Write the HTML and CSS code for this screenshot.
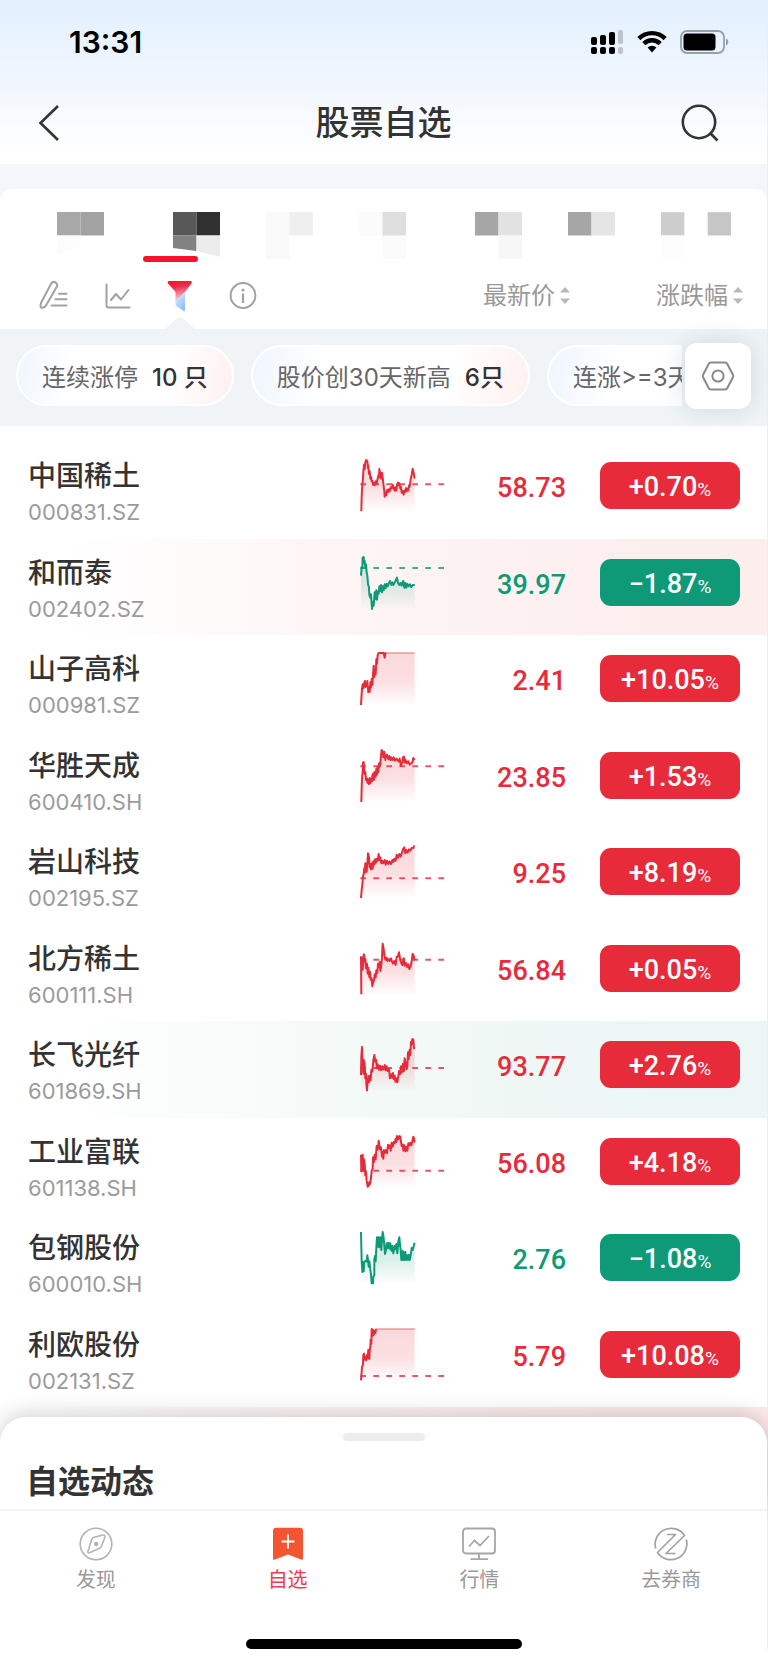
FILE: index.html
```html
<!DOCTYPE html>
<html lang="zh-CN">
<head>
<meta charset="utf-8">
<meta name="viewport" content="width=device-width, initial-scale=1">
<title>股票自选</title>
<link rel="stylesheet" href="styles.css">
</head>
<body>
<div class="page">
  <header class="top">
    <div class="status">
      <span class="status-time">13:31</span>
      <div class="status-icons">
        <svg width="33" height="24" viewBox="0 0 33 24"><g fill="#000"><rect x="0" y="7" width="6" height="8" rx="2"/><rect x="9" y="5" width="6" height="10" rx="2"/><rect x="18" y="2" width="6" height="13" rx="2"/><rect x="0" y="17" width="6" height="7" rx="2"/><rect x="9" y="17" width="6" height="7" rx="2"/><rect x="18" y="17" width="6" height="7" rx="2"/></g><g fill="#bcc4cd"><rect x="27" y="0" width="5" height="14" rx="2"/><rect x="27" y="17" width="5" height="7" rx="2"/></g></svg>
        <svg width="30" height="24" viewBox="0 0 30 24"><g fill="none" stroke="#000" stroke-width="4.4"><path d="M1.8 8.6a18.6 18.6 0 0 1 26.4 0"/><path d="M6.8 13.6a11.6 11.6 0 0 1 16.4 0"/></g><path d="M10.6 17.6a6.4 6.4 0 0 1 8.8 0L15 22.6z" fill="#000"/></svg>
        <svg width="49" height="24" viewBox="0 0 49 24"><rect x="1" y="1" width="43" height="22" rx="6" fill="none" stroke="#97a0a8" stroke-width="1.8"/><rect x="3.500" y="3.500" width="32" height="17" rx="3.5" fill="#000"/><path d="M46 8.5c3 1.3 3 5.700 0 7z" fill="#97a0a8"/></svg>
      </div>
    </div>
    <div class="nav">
      <button class="icon-btn" aria-label="返回"><svg width="22" height="36" viewBox="0 0 22 36"><path d="M20 1 2.500 18 20 35" fill="none" stroke="#333" stroke-width="2.600"/></svg></button>
      <h1 class="nav-title">股票自选</h1>
      <button class="icon-btn" aria-label="搜索"><svg width="38" height="38" viewBox="0 0 38 38"><g fill="none" stroke="#333" stroke-width="2.600"><circle cx="18" cy="18" r="16.200"/><path d="m29.500 29.500 7 7"/></g></svg></button>
    </div>
  </header>

  <main class="panel">
    <nav class="groups" aria-label="分组">
      <button class="group group-long" aria-label="分组 1"><svg class="mosaic" viewBox="0 0 2 2"><path fill="#a8a8a8" d="M0 0h1v1H0z"/><path fill="#a2a2a2" d="M1 0h1v1H1z"/><path fill="#fcfcfc" d="M0 1h1v.5L0 1.800z"/></svg></button>
      <button class="group group-active" aria-label="分组 2"><svg class="mosaic" viewBox="0 0 2 2"><path fill="#585858" d="M0 0h1v1H0z"/><path fill="#303030" d="M1 0h1v1H1z"/><path fill="#828282" d="M0 1h1v.66L0 1.530z"/><path fill="#ececec" d="M1 1h1v.9l-1-.24z"/></svg></button>
      <button class="group" aria-label="分组 3"><svg class="mosaic" viewBox="0 0 2 2"><path fill="#f9f9f9" d="M0 0h1v2H0z"/><path fill="#efefef" d="M1 0h1v1H1z"/></svg></button>
      <button class="group group-long" aria-label="分组 4"><svg class="mosaic" viewBox="0 0 2 2"><path fill="#fbfbfb" d="M0 0h1v1H0zM1 1h1v1H1z"/><path fill="#dedede" d="M1 0h1v1H1z"/></svg></button>
      <button class="group" aria-label="分组 5"><svg class="mosaic" viewBox="0 0 2 2"><path fill="#a6a6a6" d="M0 0h1v1H0z"/><path fill="#e2e2e2" d="M1 0h1v1H1z"/><path fill="#f7f7f7" d="M1 1h1v1H1z"/></svg></button>
      <button class="group" aria-label="分组 6"><svg class="mosaic" viewBox="0 0 2 2"><path fill="#a6a6a6" d="M0 0h1v1H0z"/><path fill="#e5e5e5" d="M1 0h1v1H1z"/></svg></button>
      <button class="group" aria-label="分组 7"><svg class="mosaic mosaic-wide" viewBox="0 0 3 2"><path fill="#cdcdcd" d="M0 0h1v1H0z"/><path fill="#c6c6c6" d="M2 0h1v1H2z"/><path fill="#fdfdfd" d="M0 1h1v1H0z"/></svg></button>
    </nav>

    <div class="tools">
      <div class="tool-icons">
        <button class="icon-btn" aria-label="编辑"><svg width="30" height="32" viewBox="0 0 30 32"><g fill="none" stroke="#a2a2a2" stroke-width="2" stroke-linejoin="round" stroke-linecap="round"><path d="M12.500 3a3.300 3.300 0 0 1 5.400 3.600L7 25.500q-1.200 2-3.500 2.300-2.200 0-2-2.200.1-2 1.200-4z"/><path d="M20 13.800h7.500M16.500 19.300h11M12.500 25.500h15"/></g></svg></button>
        <button class="icon-btn" aria-label="走势图"><svg width="26" height="32" viewBox="0 0 26 32"><g fill="none" stroke="#a2a2a2" stroke-width="2" stroke-linejoin="round" stroke-linecap="round"><path d="M1.500 4.500v21q0 2 2 2H24.500"/><path d="m6 20 5-6 5 5.500 7.500-9.500"/></g></svg></button>
        <button class="icon-btn icon-funnel" aria-label="筛选" aria-expanded="true"><svg width="26" height="32" viewBox="0 0 26 32"><defs><linearGradient id="fr" x1=".3" y1="0" x2=".5" y2="1"><stop offset="0" stop-color="#f5142f"/><stop offset=".3" stop-color="#ee2f4c"/><stop offset="1" stop-color="#fde6ec"/></linearGradient><linearGradient id="fb" x1="0" y1="0" x2=".6" y2="1"><stop offset="0" stop-color="#e6f1ff"/><stop offset="1" stop-color="#8cc0ff"/></linearGradient></defs><path fill="url(#fr)" d="M1.500 1h22.500q1.500 1 .5 2.500L18 12 8.500 22V12L1 3.500Q0 2 1.500 1z"/><path fill="url(#fb)" d="M18 12V30q0 1.500-1.500 1L9.500 26q-1-1-1-2V21z"/></svg></button>
        <button class="icon-btn" aria-label="说明"><svg width="28" height="32" viewBox="0 0 28 32"><circle cx="14" cy="15.500" r="12.400" fill="none" stroke="#a2a2a2" stroke-width="2"/><path d="M14 13.500v9.500" stroke="#a2a2a2" stroke-width="2.200"/><circle cx="14" cy="10" r="1.600" fill="#a2a2a2"/></svg></button>
      </div>
      <div class="sorts">
        <button class="sort">最新价<svg width="12" height="20" viewBox="0 0 12 20"><path fill="#b9b9b9" d="m6 1 5 5.500H1zM6 18l5-5.500H1z"/></svg></button>
        <button class="sort">涨跌幅<svg width="12" height="20" viewBox="0 0 12 20"><path fill="#b9b9b9" d="m6 1 5 5.500H1zM6 18l5-5.500H1z"/></svg></button>
      </div>
    </div>

    <section class="filters">
      <div class="chips">
        <button class="chip"><span>连续涨停</span><b>10 只</b></button>
        <button class="chip"><span>股价创30天新高</span><b>6只</b></button>
        <button class="chip chip-cut"><span>连涨&gt;=3天</span></button>
      </div>
      <button class="settings" aria-label="设置"><svg width="34" height="30" viewBox="0 0 34 30"><g fill="none" stroke="#8a8a8a" stroke-width="2" stroke-linejoin="round"><path d="M10 1.500h14q1.500 0 2.200 1.200l5.600 10.800q.8 1.500 0 3l-5.600 10.800q-.7 1.200-2.200 1.200H10q-1.500 0-2.200-1.200L2.200 16.500q-.8-1.500 0-3L7.800 2.700Q8.500 1.500 10 1.500z"/><circle cx="17" cy="15" r="5.600"/></g></svg></button>
    </section>

    <table class="stocks"><tbody id="rows"></tbody></table>
    <div class="peek"></div>
  </main>

  <section class="sheet">
    <span class="grip"></span>
    <h2 class="sheet-title">自选动态</h2>
  </section>

  <footer class="bottom">
    <nav class="tabbar">
      <a class="tab" href="#discover"><svg width="34" height="34" viewBox="0 0 34 34"><g fill="none" stroke="#b4b4b4" stroke-width="1.600" stroke-linejoin="round"><circle cx="17" cy="17" r="15.800"/><path d="M12.800 12.200q.5-1.200 1.600-1.700L24 8q2.500-.2 1.900 2.200L22.500 19q-.6 1.600-2 2.300L11 25.600q-2.600.8-2-1.600z"/></g><circle cx="17.200" cy="17" r="2.200" fill="#b0b0b0"/></svg>发现</a>
      <a class="tab tab-active" href="#watch"><svg width="34" height="34" viewBox="0 0 34 34"><path fill="#f45531" d="M5 .8h24q3 0 3 3v27.500q0 2.200-2 1.200L17 27.500 4 32.500q-2 1-2-1.200V3.800q0-3 3-3z"/><path d="M17 7.500v14M10.500 14.500h13" stroke="#fff" stroke-width="1.800"/></svg>自选</a>
      <a class="tab" href="#market"><svg width="34" height="34" viewBox="0 0 34 34"><g fill="none" stroke="#a6a6a6" stroke-width="1.800"><rect x="1" y="1.500" width="32" height="25" rx="3"/><path d="M17 26.500v5.500M8.500 32.200h17.500M7 19.500l5.500-6 5.500 5 9-9.500"/></g></svg>行情</a>
      <a class="tab" href="#broker"><svg width="34" height="34" viewBox="0 0 34 34"><g fill="none" stroke="#a2a2a2" stroke-width="1.700" stroke-linejoin="round"><path d="M1.700 21.500A16 16 0 0 1 30.500 8.500L12 26.500h9.500M32.300 12.500A16 16 0 0 1 3.500 25.500L21.500 7.500H13"/></g></svg>去券商</a>
    </nav>
    <div class="home-bar"></div>
  </footer>
</div>
<script src="rows.js"></script>
</body>
</html>
```
FILE: rows.js
```js
// Each line is a list of x,y pairs in a 264 x 174 box; base is the height of the previous close.
const stocks = [
  { name: "中国稀土", code: "000831.SZ", price: "58.73", change: "+0.70", base: 79,
    line: "7,160 8,116 9,95 12,60 13,40 15,20 17,34 19,12 22,6 25,10 27,30 28,22 30,48 32,40 34,62 36,56 38,70 40,68 42,80 44,74 47,82 50,70 53,76 56,62 58,52 60,58 61,33 64,50 66,62 69,44 71,58 73,76 76,100 77,116 80,104 82,112 84,96 87,102 89,94 92,100 95,88 98,92 101,80 104,90 107,98 109,88 112,98 114,80 117,74 120,82 121,76 124,92 126,86 128,104 130,98 134,110 136,98 138,102 141,90 143,100 146,92 148,98 150,82 152,86 155,64 158,50 161,32 164,44 167,62" },
  { name: "和而泰", code: "002402.SZ", price: "39.97", change: "−1.87", tint: "red", base: 39,
    line: "6,62 8,36 10,40 11,8 14,6 15,24 17,18 19,38 21,28 23,52 25,62 27,86 30,98 31,120 34,128 36,118 39,162 42,140 44,152 47,112 49,132 52,106 54,134 56,110 59,116 61,94 64,108 66,90 69,112 71,94 74,106 77,88 80,100 83,86 86,94 89,86 93,78 97,90 100,82 103,90 106,84 110,76 114,68 117,84 121,90 124,84 128,92 131,80 133,78 136,98 139,84 142,98 145,86 149,94 153,88 157,96 161,90 167,90" },
  { name: "山子高科", code: "000981.SZ", price: "2.41", change: "+10.05", cap: 60,
    line: "6,162 7,146 9,112 11,100 13,112 15,98 18,90 19,108 21,98 23,106 25,90 27,112 28,124 31,108 32,122 34,94 36,110 38,84 40,102 42,72 44,44 46,78 48,60 50,70 52,24 54,38 56,12 59,6 74,6 77,20 79,8 82,6" },
  { name: "华胜天成", code: "600410.SH", price: "23.85", change: "+1.53", base: 55,
    line: "7,162 8,120 9,92 11,70 12,44 14,42 15,60 17,78 19,72 21,96 24,92 25,104 28,94 30,108 32,90 34,106 36,92 39,100 40,82 43,76 45,96 47,72 50,86 52,62 54,80 56,56 58,72 60,46 62,56 64,48 66,22 68,6 71,10 73,28 76,12 79,36 81,26 84,20 88,34 91,24 94,36 97,28 100,36 104,28 108,38 113,32 118,40 122,32 126,54 130,42 132,28 135,26 137,44 140,36 143,46 148,40 152,50 156,46 160,44 163,30 167,36" },
  { name: "岩山科技", code: "002195.SZ", price: "9.25", change: "+8.19", base: 103,
    line: "6,162 8,138 10,122 12,96 14,90 16,72 17,86 19,58 21,74 23,84 25,58 27,28 30,40 32,70 34,60 36,76 39,58 41,74 43,52 46,62 48,46 51,56 53,44 56,50 59,30 61,48 64,40 67,58 70,50 73,58 77,48 80,62 84,50 88,60 92,52 96,60 100,48 103,54 106,44 110,50 113,32 117,42 121,30 125,38 129,26 133,14 136,10 139,28 142,18 146,26 150,16 154,20 158,12 163,12 165,6 167,6" },
  { name: "北方稀土", code: "600111.SH", price: "56.84", change: "+0.05", base: 56,
    line: "7,160 6,48 9,60 11,86 13,46 15,40 17,62 19,54 21,82 24,68 26,98 28,80 31,108 33,92 35,116 38,112 40,136 42,126 45,118 47,100 50,110 52,88 55,96 57,68 60,78 62,62 64,90 66,80 69,50 71,8 74,24 76,42 79,56 82,50 85,60 88,54 92,60 96,52 99,62 102,68 106,60 110,72 113,48 117,46 120,34 123,52 126,64 130,72 134,52 137,74 141,66 144,78 148,70 151,84 155,76 158,60 161,38 164,44 167,58" },
  { name: "长飞光纤", code: "601869.SH", price: "93.77", change: "+2.76", tint: "green", base: 93,
    line: "6,114 7,60 9,30 11,76 13,110 14,68 17,82 19,124 21,110 22,140 24,160 26,132 28,118 30,136 32,116 35,130 37,98 40,104 43,70 46,54 49,74 51,68 54,94 56,82 60,98 63,86 66,100 69,88 73,98 77,84 80,100 83,88 86,102 90,96 93,124 96,112 99,122 102,108 104,126 107,116 109,134 112,124 115,136 118,118 120,102 123,112 126,88 129,106 132,80 135,102 137,64 140,78 143,96 145,88 147,46 149,66 152,38 154,54 156,14 158,22 160,6 163,8 165,34 167,30" },
  { name: "工业富联", code: "601138.SH", price: "56.08", change: "+4.18", base: 110,
    line: "6,62 7,112 9,70 11,62 13,110 15,76 17,88 19,124 21,112 23,140 26,158 29,156 31,144 33,150 36,132 38,110 41,104 42,70 45,84 47,62 50,76 53,36 55,48 57,42 59,20 61,32 63,46 66,40 69,68 71,54 73,74 75,48 78,56 81,48 84,58 87,32 90,42 93,34 95,50 98,26 101,38 104,24 107,28 110,14 112,24 114,6 118,16 121,6 124,8 126,24 128,36 131,32 133,50 136,34 139,52 142,38 145,50 148,28 151,34 154,26 157,34 160,22 163,8 165,14 167,26" },
  { name: "包钢股份", code: "600010.SH", price: "2.76", change: "−1.08",
    line: "6,6 7,50 8,92 10,126 12,96 14,124 16,96 20,92 23,94 25,76 27,90 29,110 31,94 34,118 36,134 38,160 42,160 43,140 46,136 46,90 48,78 50,94 52,52 54,22 57,50 59,22 62,52 64,22 67,60 69,28 71,6 74,24 76,48 78,72 81,60 83,40 86,54 88,38 91,56 94,40 97,62 100,48 103,70 107,48 110,58 112,42 115,70 118,34 121,22 123,44 125,60 127,90 130,62 132,90 134,66 136,90 139,66 141,90 144,76 147,90 149,74 152,90 155,76 158,54 161,60 164,48 167,38" },
  { name: "利欧股份", code: "002131.SZ", price: "5.79", change: "+10.08", base: 147, cap: 50,
    line: "6,160 8,134 9,120 12,112 13,84 15,80 17,98 20,90 22,100 24,84 26,94 28,68 31,96 32,72 34,60 35,38 37,50 38,6 41,26 42,8 44,24 47,12 49,18 51,6" }
];

const colors = { up: "#e72b3a", down: "#0e9a77" };

function spark(s, dir, i) {
  const color = colors[dir];
  const end = s.cap ? " 167,6" : "";
  const area = s.line + end + " 167,164 6,164";
  return `<svg class="spark" viewBox="0 0 264 174" aria-hidden="true">
    <defs><linearGradient id="area${i}" gradientUnits="userSpaceOnUse" x1="0" y1="0" x2="0" y2="164">
      <stop offset="0" stop-color="${color}" stop-opacity=".18"/>
      <stop offset=".55" stop-color="${color}" stop-opacity=".15"/>
      <stop offset="1" stop-color="${color}" stop-opacity="0"/></linearGradient></defs>
    <polygon points="${area}" fill="url(#area${i})"/>
    ${s.base ? `<path d="M4 ${s.base}H256" stroke="${color}" stroke-width="6" stroke-dasharray="17 22" opacity=".8"/>` : ""}
    ${s.cap ? `<path d="M${s.cap} 6H167" stroke="${color}" stroke-width="5" opacity=".45"/>` : ""}
    <polyline points="${s.line}" fill="none" stroke="${color}" stroke-width="6" stroke-linejoin="round"/>
  </svg>`;
}

document.getElementById("rows").innerHTML = stocks.map((s, i) => {
  const dir = s.change[0] === "+" ? "up" : "down";
  return `<tr class="stock ${s.tint ? "tint-" + s.tint : ""}">
    <td class="cell-name"><div class="name">${s.name}</div><div class="code">${s.code}</div></td>
    <td class="cell-spark">${spark(s, dir, i)}</td>
    <td class="cell-price ${dir}">${s.price}</td>
    <td class="cell-change"><span class="badge badge-${dir}">${s.change}<small>%</small></span></td>
  </tr>`;
}).join("");
```
FILE: styles.css
```css
* { box-sizing: border-box; }
body {
  margin: 0;
  background: #fff;
  color: #333;
  font-family: Inter, "Noto Sans CJK SC", sans-serif;
}
h1, h2 { margin: 0; }
button {
  margin: 0;
  padding: 0;
  border: 0;
  background: none;
  color: inherit;
  font: inherit;
}
svg { display: block; flex: none; }
.page { border-right: 1px solid #eee; }

.top { background: linear-gradient(#e3effe 0, #e6f2fe 24px, #f2f7fe 90px, #fff 154px); }
.status {
  display: flex;
  align-items: center;
  justify-content: space-between;
  height: 84px;
  padding: 0 38px 0 69px;
}
.status-time { color: #000; font-size: 30px; font-weight: 600; line-height: 36px; }
.status-icons { display: flex; gap: 13px; }
.nav {
  display: flex;
  align-items: center;
  justify-content: space-between;
  height: 80px;
  padding: 0 48px 2px 38px;
}
.nav-title { padding-left: 26px; font-size: 34px; font-weight: 500; line-height: 48px; }

.panel { padding-top: 25px; background: linear-gradient(#f4f6fb 60px, #fff 60px); }
.groups {
  display: flex;
  gap: 46px;
  padding: 23px 35px 0 57px;
  border-radius: 12px 12px 0 0;
  background: #fff;
}
.group { position: relative; }
.group-long { margin-right: 23px; }
.group-active::after {
  content: "";
  position: absolute;
  left: -30px;
  bottom: -3px;
  width: 55px;
  height: 6px;
  border-radius: 3px;
  background: #f5142f;
}
.mosaic { width: 47px; height: 47px; }
.mosaic-wide { width: 70px; }

.tools {
  display: flex;
  align-items: center;
  justify-content: space-between;
  height: 70px;
  padding: 3px 23px 0 39px;
}
.tool-icons { display: flex; gap: 36px; }
.sorts { display: flex; gap: 85px; color: #999; }
.sort { display: flex; align-items: center; gap: 4px; font-size: 24px; line-height: 32px; }

.filters { position: relative; padding: 16px 0 20px 16px; background: #f0f4f6; }
.filters::before {
  content: "";
  position: absolute;
  left: 165px;
  bottom: 100%;
  border: solid transparent;
  border-width: 0 15px 13px;
  border-bottom-color: #f0f4f6;
}
.chips { display: flex; gap: 17px; margin-right: 85px; overflow: hidden; }
.chip {
  display: flex;
  flex: none;
  align-items: center;
  gap: 14px;
  height: 61px;
  padding: 0 24px;
  border: 2px solid #fff;
  border-radius: 31px;
  background: linear-gradient(100deg, #eff6ff, #fff 26%, #fff 70%, #fff0f0);
  color: #666;
  font-size: 24px;
  white-space: nowrap;
}
.chip b { color: #333; font-weight: 500; }
.chip-cut { width: 278px; }
.settings {
  position: absolute;
  top: 14px;
  right: 16px;
  display: grid;
  place-items: center;
  width: 66px;
  height: 66px;
  border-radius: 12px;
  background: #fff;
  box-shadow: 0 0 24px rgba(120, 140, 160, .28);
}

.stocks { width: 100%; height: 965px; margin-top: 16px; border-collapse: collapse; table-layout: auto; }
.stocks td { padding: 0; vertical-align: top; }
.tint-red { background: linear-gradient(90deg, #fff 8%, #fef6f6 40%, #fdeeee 85%); }
.tint-green { background: linear-gradient(90deg, #fff 8%, #f5faf8 40%, #ecf6f4 85%); }
.stocks .cell-name { padding: 16px 0 8px 28px; }
.name { font-size: 28px; font-weight: 500; line-height: 36px; }
.code { color: #9b9b9b; font-size: 22px; line-height: 36px; }
.stocks .cell-spark { width: 88px; padding-top: 16px; }
.spark { width: 88px; height: 58px; }
.stocks .cell-price {
  width: 153px;
  padding: 28px 34px 0 0;
  font-family: Roboto, sans-serif;
  font-size: 27px;
  font-weight: 500;
  line-height: 36px;
  text-align: right;
}
.up { color: #e72b3a; }
.down { color: #0e9a77; }
.stocks .cell-change { width: 167px; padding: 20px 27px 0 0; }
.badge {
  display: flex;
  align-items: baseline;
  justify-content: center;
  height: 47px;
  border-radius: 11px;
  color: #fff;
  font-family: Roboto, sans-serif;
  font-size: 27px;
  font-weight: 500;
  line-height: 50px;
}
.badge small { font-size: 19px; font-weight: 400; }
.badge-up { background: #e72b3a; }
.badge-down { background: #0e9a77; }
.peek { height: 36px; background: linear-gradient(90deg, #fff 8%, #fef4f4 40%, #fdeaea 85%); }

.sheet {
  position: relative;
  display: flex;
  flex-direction: column;
  height: 92px;
  margin-top: -26px;
  padding: 16px 26px 0;
  border-radius: 26px 26px 0 0;
  background: #fff;
  box-shadow: 0 -2px 22px rgba(0, 0, 0, .2);
}
.grip { align-self: center; width: 82px; height: 8px; border-radius: 4px; background: #ededed; }
.sheet-title { margin-top: 17px; font-size: 32px; font-weight: 600; line-height: 48px; }
.bottom { position: relative; border-top: 2px solid #f4f4f4; background: #fff; }
.tabbar { display: grid; grid-template-columns: repeat(4, 1fr); padding-top: 16px; }
.tab {
  display: flex;
  flex-direction: column;
  align-items: center;
  gap: 4px;
  color: #999;
  font-size: 20px;
  line-height: 30px;
  text-decoration: none;
}
.tab-active { color: #f03a4e; }
.home-bar { width: 276px; height: 10px; margin: 44px auto 17px; border-radius: 5px; background: #000; }
```
